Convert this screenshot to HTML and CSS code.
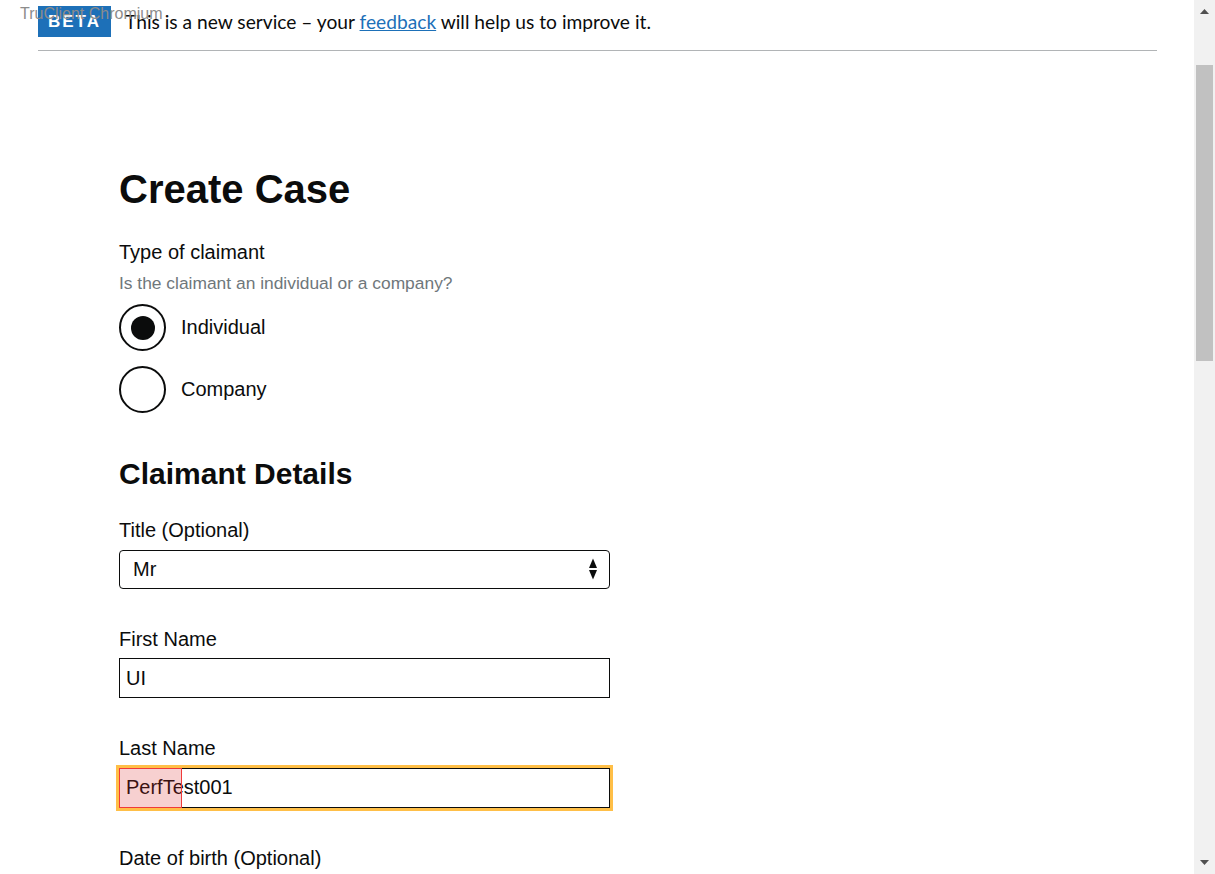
FILE: index.html
```html
<!DOCTYPE html>
<html lang="en">
<head>
<meta charset="utf-8">
<title>Create Case</title>
<link rel="stylesheet" href="styles.css">
</head>
<body>
<div class="window">
  <div class="viewport">
    <div class="tc-label">TruClient Chromium</div>
    <div class="phase-banner">
      <strong class="tag">BETA</strong>
      <span class="phase-text">This is a new service – your <a href="#" class="link">feedback</a> will help us to improve it.</span>
    </div>
    <main class="main">
      <h1 class="heading-xl">Create Case</h1>
      <fieldset class="fieldset">
        <legend class="legend">Type of claimant</legend>
        <div class="hint">Is the claimant an individual or a company?</div>
        <div class="radios">
          <label class="radio">
            <span class="radio-mark checked"><span class="radio-dot"></span></span>
            <span class="radio-label">Individual</span>
          </label>
          <label class="radio">
            <span class="radio-mark"></span>
            <span class="radio-label">Company</span>
          </label>
        </div>
      </fieldset>
      <h2 class="heading-l">Claimant Details</h2>
      <div class="form-group">
        <label class="label" for="title">Title (Optional)</label>
        <div class="select-wrap">
          <select id="title" class="select">
            <option>Mr</option>
          </select>
          <svg class="select-arrows" width="8" height="22" viewBox="0 0 8 22" aria-hidden="true">
            <path d="M4 0.5 L8 10 L0 10 Z" fill="#0b0c0c"/>
            <path d="M0 12 L8 12 L4 21.5 Z" fill="#0b0c0c"/>
          </svg>
        </div>
      </div>
      <div class="form-group">
        <label class="label" for="first">First Name</label>
        <input id="first" class="input" type="text" value="UI">
      </div>
      <div class="form-group">
        <label class="label" for="last">Last Name</label>
        <div class="input-wrap">
          <input id="last" class="input input-focus" type="text" value="PerfTest001">
          <span class="tc-highlight"></span>
        </div>
      </div>
      <div class="form-group">
        <label class="label">Date of birth (Optional)</label>
      </div>
    </main>
  </div>
  <div class="scrollbar">
    <div class="sb-btn">
      <svg width="9" height="5" viewBox="0 0 9 5"><path d="M4.5 0 L9 5 L0 5 Z" fill="#505050"/></svg>
    </div>
    <div class="sb-track"><div class="sb-thumb"></div></div>
    <div class="sb-btn sb-btn-down">
      <svg width="9" height="5" viewBox="0 0 9 5"><path d="M0 0 L9 0 L4.5 5 Z" fill="#505050"/></svg>
    </div>
  </div>
</div>
</body>
</html>
```
FILE: styles.css
```css
html, body {
  margin: 0;
  padding: 0;
}
body {
  font-family: "Liberation Sans", Arial, sans-serif;
  color: #0b0c0c;
  background: #fff;
}
.window {
  display: flex;
  height: 874px;
  overflow: hidden;
}
.viewport {
  flex: 1;
  position: relative;
  overflow: hidden;
  background: #fff;
}
.tc-label {
  position: absolute;
  left: 20px;
  top: 5px;
  font-family: "Liberation Sans", Arial, sans-serif;
  font-size: 16px;
  line-height: 18px;
  color: #8c8c8c;
  z-index: 2;
}
.phase-banner {
  margin: 0 37px 0 38px;
  padding: 6px 0 13px;
  border-bottom: 1px solid #b1b4b6;
  display: flex;
  align-items: center;
}
.tag {
  display: inline-block;
  background: #1d70b8;
  color: #fff;
  font-family: "Liberation Sans", Arial, sans-serif;
  font-weight: 700;
  font-size: 17px;
  letter-spacing: 2px;
  height: 31px;
  line-height: 32px;
  padding: 0 10px 0 10px;
  margin-right: 14px;
}
.phase-text {
  font-family: Lato, "Liberation Sans", sans-serif;
  font-size: 19.2px;
  line-height: 24px;
}
.link {
  color: #1d70b8;
  text-decoration: underline;
}
.main {
  margin: 115px 0 0 119px;
  width: 491px;
}
.heading-xl {
  margin: 0;
  font-size: 40px;
  line-height: 46px;
  font-weight: 700;
}
.fieldset {
  margin: 28px 0 0;
  padding: 0;
  border: 0;
  min-width: 0;
}
.legend {
  padding: 0;
  font-size: 20px;
  line-height: 25px;
}
.hint {
  margin-top: 8px;
  font-size: 17.4px;
  line-height: 20px;
  color: #6f777b;
}
.radios {
  margin-top: 11px;
  display: flex;
  flex-direction: column;
  gap: 15px;
}
.radio {
  display: flex;
  align-items: center;
  gap: 15px;
  height: 47px;
}
.radio-mark {
  box-sizing: border-box;
  width: 47px;
  height: 47px;
  border: 2px solid #0b0c0c;
  border-radius: 50%;
  display: flex;
  align-items: center;
  justify-content: center;
  background: #fff;
}
.radio-dot {
  width: 24px;
  height: 24px;
  border-radius: 50%;
  background: #0b0c0c;
}
.radio-label {
  font-size: 20px;
  line-height: 25px;
}
.heading-l {
  margin: 43px 0 0;
  font-size: 30px;
  line-height: 35px;
  font-weight: 700;
}
.form-group {
  margin-top: 27px;
  display: flex;
  flex-direction: column;
}
.form-group + .form-group {
  margin-top: 38px;
}
.label {
  font-size: 20px;
  line-height: 25px;
  margin-bottom: 6.5px;
}
.select-wrap {
  position: relative;
  width: 491px;
}
.select {
  appearance: none;
  -webkit-appearance: none;
  box-sizing: border-box;
  width: 491px;
  height: 39px;
  margin: 0;
  padding: 0 30px 0 13px;
  border: 1px solid #0b0c0c;
  border-radius: 4px;
  background: #fff;
  font-family: "Liberation Sans", Arial, sans-serif;
  font-size: 20px;
  color: #0b0c0c;
}
.select-arrows {
  position: absolute;
  right: 13px;
  top: 8px;
  pointer-events: none;
}
.input-wrap {
  position: relative;
  width: 491px;
}
.input {
  box-sizing: border-box;
  width: 491px;
  height: 40px;
  margin: 0;
  padding: 0 6px;
  border: 1px solid #0b0c0c;
  border-radius: 0;
  background: #fff;
  font-family: "Liberation Sans", Arial, sans-serif;
  font-size: 20px;
  color: #0b0c0c;
}
.input-focus {
  outline: 3px solid #ffbf47;
  outline-offset: 0;
}
.tc-highlight {
  position: absolute;
  left: 0;
  top: 0;
  width: 63px;
  height: 40px;
  box-sizing: border-box;
  border: 1px solid #f03a3a;
  background: rgba(220, 40, 40, 0.22);
}
.scrollbar {
  width: 21px;
  flex: none;
  background: #f1f1f1;
  display: flex;
  flex-direction: column;
}
.sb-btn {
  height: 21px;
  flex: none;
  display: flex;
  justify-content: center;
  padding-top: 9px;
  box-sizing: border-box;
}
.sb-btn-down {
  padding-top: 7px;
}
.sb-track {
  flex: 1;
  padding: 44px 2px 0;
}
.sb-thumb {
  height: 296px;
  background: #c1c1c1;
}
```
